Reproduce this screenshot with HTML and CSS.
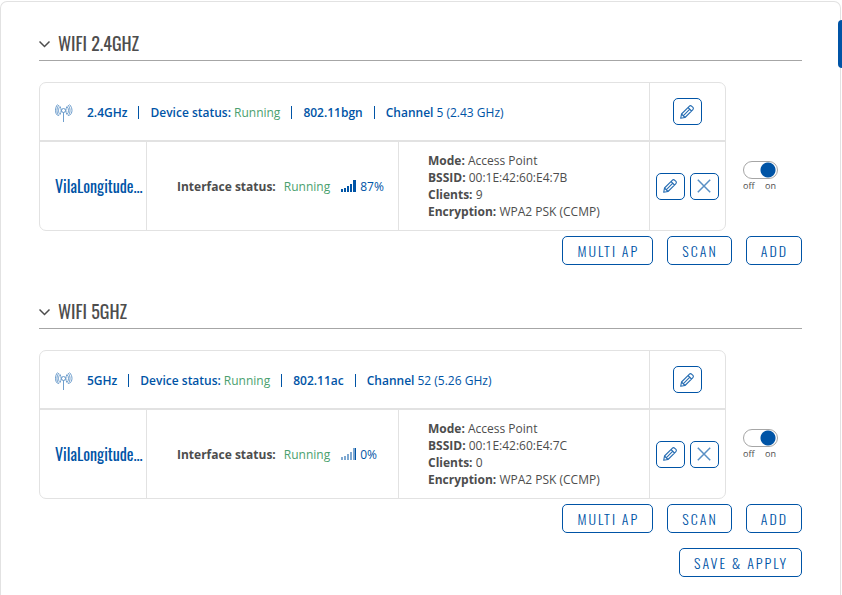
FILE: index.html
```html
<!DOCTYPE html>
<html lang="en">
<head>
<meta charset="utf-8">
<meta name="viewport" content="width=device-width, initial-scale=1">
<title>Wireless interfaces</title>
<link rel="stylesheet" href="styles.css">
</head>
<body>
<svg class="sprite" aria-hidden="true">
  <symbol id="chevron" viewBox="0 0 12 8"><path d="M.5 1.500 5.500 6.500 10.500 1.500" fill="none" stroke="currentColor" stroke-width="1.5"/></symbol>
  <symbol id="antenna" viewBox="0 0 18 18">
    <g fill="none" stroke="currentColor" stroke-width=".8">
      <circle cx="8.500" cy="6.500" r="2"/>
      <path d="M8.500 8.500V18M5 2.500C6.500 4.500 6.500 8.500 5 10.500M5 2.500C3 4.500 3 8.500 5 10.500M4 1C1.300 4 1.300 9 4 12M2.500 .5C-.2 4-.2 9 2.500 11.500M12 2.500C10.500 4.500 10.500 8.500 12 10.500M12 2.500C14 4.500 14 8.500 12 10.500M13 1C15.700 4 15.700 9 13 12M14.500 .5C17.800 4 17.800 9 14.500 11.500"/>
    </g>
  </symbol>
  <symbol id="pencil" viewBox="0 0 14 14">
    <g fill="none" stroke="currentColor" stroke-width="1.100" stroke-linejoin="round">
      <path d="M.7 13.300 1.500 9 9.200 1.300Q10.500 0 11.800 1.300L12.700 2.200Q14 3.500 12.700 4.800L5 12.500ZM8 2.500 11.500 6M1.500 9 5 12.500M3.200 10.800 9.800 4.200"/>
    </g>
  </symbol>
  <symbol id="cross" viewBox="0 0 14 14"><path d="M.8 .8 13.200 13.200M13.200 .8 .8 13.200" fill="none" stroke="currentColor" stroke-width="1.500"/></symbol>
  <symbol id="signal" viewBox="0 0 15 12"><path d="M0 9h2v3H0zM3 8h2v4H3zM6 6h2v6H6zM9 4h2v8H9zM12 0h3v12h-3z" fill="currentColor"/></symbol>
  <symbol id="signal-none" viewBox="0 0 15 12"><path d="M0 9h2v3H0zM3 8h2v4H3zM6 6h2v6H6zM9 4h2v8H9zM12 0h2v12h-2z" fill="currentColor" opacity=".5"/><path d="M14 0h1v12h-1z" fill="currentColor"/></symbol>
</svg>
<main class="panel">
  <button class="side-tab" type="button" aria-label="Open side panel"></button>

  <section class="band">
    <h2 class="band-title"><svg class="chevron"><use href="#chevron"/></svg>WIFI 2.4GHZ</h2>
    <div class="band-body">
      <div class="card">
        <div class="row device">
          <div class="cell summary">
            <svg class="antenna"><use href="#antenna"/></svg>
            <ul class="facts">
              <li><b>2.4GHz</b></li>
              <li><b>Device status:</b> <span class="ok">Running</span></li>
              <li><b>802.11bgn</b></li>
              <li><b>Channel</b> 5 (2.43 GHz)</li>
            </ul>
          </div>
          <div class="cell actions"><button class="icon-button" type="button" aria-label="Edit device"><svg><use href="#pencil"/></svg></button></div>
        </div>
        <div class="row interface">
          <div class="cell name">VilaLongitude...</div>
          <div class="cell status"><b>Interface status:</b><span class="ok">Running</span><span class="level"><svg class="signal"><use href="#signal"/></svg>87%</span></div>
          <div class="cell details">
            <div><b>Mode:</b> Access Point</div>
            <div><b>BSSID:</b> 00:1E:42:60:E4:7B</div>
            <div><b>Clients:</b> 9</div>
            <div><b>Encryption:</b> WPA2 PSK (CCMP)</div>
          </div>
          <div class="cell actions">
            <button class="icon-button" type="button" aria-label="Edit interface"><svg><use href="#pencil"/></svg></button>
            <button class="icon-button light" type="button" aria-label="Delete interface"><svg><use href="#cross"/></svg></button>
          </div>
        </div>
      </div>
      <label class="switch"><input type="checkbox" checked aria-label="Enable 2.4GHz interface"><span class="switch-text"><span>off</span><span>on</span></span></label>
    </div>
    <div class="buttons">
      <button class="button" type="button">MULTI AP</button>
      <button class="button" type="button">SCAN</button>
      <button class="button" type="button">ADD</button>
    </div>
  </section>

  <section class="band">
    <h2 class="band-title"><svg class="chevron"><use href="#chevron"/></svg>WIFI 5GHZ</h2>
    <div class="band-body">
      <div class="card">
        <div class="row device">
          <div class="cell summary">
            <svg class="antenna"><use href="#antenna"/></svg>
            <ul class="facts">
              <li><b>5GHz</b></li>
              <li><b>Device status:</b> <span class="ok">Running</span></li>
              <li><b>802.11ac</b></li>
              <li><b>Channel</b> 52 (5.26 GHz)</li>
            </ul>
          </div>
          <div class="cell actions"><button class="icon-button" type="button" aria-label="Edit device"><svg><use href="#pencil"/></svg></button></div>
        </div>
        <div class="row interface">
          <div class="cell name">VilaLongitude...</div>
          <div class="cell status"><b>Interface status:</b><span class="ok">Running</span><span class="level"><svg class="signal"><use href="#signal-none"/></svg>0%</span></div>
          <div class="cell details">
            <div><b>Mode:</b> Access Point</div>
            <div><b>BSSID:</b> 00:1E:42:60:E4:7C</div>
            <div><b>Clients:</b> 0</div>
            <div><b>Encryption:</b> WPA2 PSK (CCMP)</div>
          </div>
          <div class="cell actions">
            <button class="icon-button" type="button" aria-label="Edit interface"><svg><use href="#pencil"/></svg></button>
            <button class="icon-button light" type="button" aria-label="Delete interface"><svg><use href="#cross"/></svg></button>
          </div>
        </div>
      </div>
      <label class="switch"><input type="checkbox" checked aria-label="Enable 5GHz interface"><span class="switch-text"><span>off</span><span>on</span></span></label>
    </div>
    <div class="buttons">
      <button class="button" type="button">MULTI AP</button>
      <button class="button" type="button">SCAN</button>
      <button class="button" type="button">ADD</button>
    </div>
  </section>

  <div class="buttons save"><button class="button" type="button">SAVE &amp; APPLY</button></div>
</main>
</body>
</html>
```
FILE: styles.css
```css
:root {
  --blue: #0054a6;
  --green: #4a9f6e;
  --ink: #4d4d4d;
  --line: #e2e2e2;
  --narrow: Oswald, "Liberation Sans Narrow", sans-serif;
}

* { box-sizing: border-box; }

body {
  margin: 0;
  padding: 1px 1px 0 0;
  background: #fff;
  color: var(--ink);
  font: 12px/17px "Open Sans", sans-serif;
}

b { font-weight: 700; }
.sprite { display: none; }

.panel {
  position: relative;
  min-height: calc(100vh - 1px);
  padding: 30px 38px 0;
  border: 1px solid var(--line);
  border-bottom: 0;
  border-radius: 7px 7px 0 0;
}

.side-tab {
  position: absolute;
  top: 18px;
  right: -2px;
  width: 4px;
  height: 48px;
  padding: 0;
  border: 0;
  border-radius: 4px 0 0 4px;
  background: var(--blue);
}

.band-title {
  display: flex;
  align-items: center;
  gap: 7px;
  height: 29px;
  margin: 0 0 21px;
  padding-bottom: 6px;
  border-bottom: 1px solid #a6a6a6;
  font: 400 18px/24px var(--narrow);
}

.chevron { width: 12px; height: 8px; margin-top: 2px; }

.band-body { display: flex; }

.card {
  flex: 1;
  min-width: 0;
  border: 1px solid var(--line);
  border-radius: 7px;
}

.row { display: grid; }
.device { grid-template-columns: 1fr 76px; min-height: 57px; }
.interface {
  grid-template-columns: 106px 1fr 251px 76px;
  min-height: 90px;
  border-top: 2px solid var(--line);
}

.cell {
  display: flex;
  align-items: center;
  min-width: 0;
}
.cell + .cell { border-left: 1px solid var(--line); }

.summary { padding-left: 15px; gap: 14px; color: var(--blue); }
.antenna { width: 18px; height: 18px; margin-top: 2px; opacity: .7; }
.facts {
  display: flex;
  margin: 0;
  padding: 1px 0 0;
  list-style: none;
}
.facts li { display: flex; align-items: center; gap: 3px; }
.facts b { font-weight: 600; }
.facts li + li::before {
  content: "";
  width: 1px;
  height: 13px;
  margin: 0 8px 0 11px;
  background: var(--blue);
}
.ok { color: var(--green); }

.actions { justify-content: center; gap: 5px; }
.icon-button {
  display: grid;
  place-items: center;
  width: 29px;
  height: 27px;
  padding: 0 1px 0 0;
  border: 1px solid var(--blue);
  border-radius: 5px;
  background: #fff;
  color: var(--blue);
}
.icon-button svg { width: 14px; height: 14px; opacity: .85; }
.icon-button.light svg { opacity: .65; }

.name {
  padding-left: 15px;
  color: var(--blue);
  font: 400 16px/24px var(--narrow);
  white-space: nowrap;
}

.status { padding-left: 30px; gap: 8px; white-space: nowrap; }
.level {
  display: flex;
  align-items: center;
  gap: 4px;
  margin-left: 3px;
  color: var(--blue);
}
.signal { width: 15px; height: 12px; }

.details {
  flex-direction: column;
  align-items: flex-start;
  justify-content: center;
  padding-left: 29px;
  white-space: nowrap;
}

.switch {
  flex: 0 0 76px;
  padding: 79px 0 0 17px;
}
.switch input {
  display: block;
  appearance: none;
  width: 35px;
  height: 18px;
  margin: 0;
  border: 1px solid #a6a6a6;
  border-radius: 9px;
  background: radial-gradient(circle at 9px 8px, var(--blue) 7px, transparent 8px);
}
.switch input:checked { background: radial-gradient(circle at 24px 8px, var(--blue) 7px, transparent 8px); }
.switch-text {
  display: flex;
  justify-content: space-between;
  width: 33px;
  font-size: 9px;
  line-height: 14px;
}

.buttons {
  display: flex;
  justify-content: flex-end;
  gap: 14px;
  margin-top: 5px;
}
.button {
  height: 29px;
  padding: 0 13px 0 14px;
  border: 1px solid var(--blue);
  border-radius: 5px;
  background: #fff;
  color: var(--blue);
  font: 300 14px/24px var(--narrow);
  letter-spacing: 2px;
}
.band + .band { margin-top: 35px; }
.save { margin-top: 15px; }
```
